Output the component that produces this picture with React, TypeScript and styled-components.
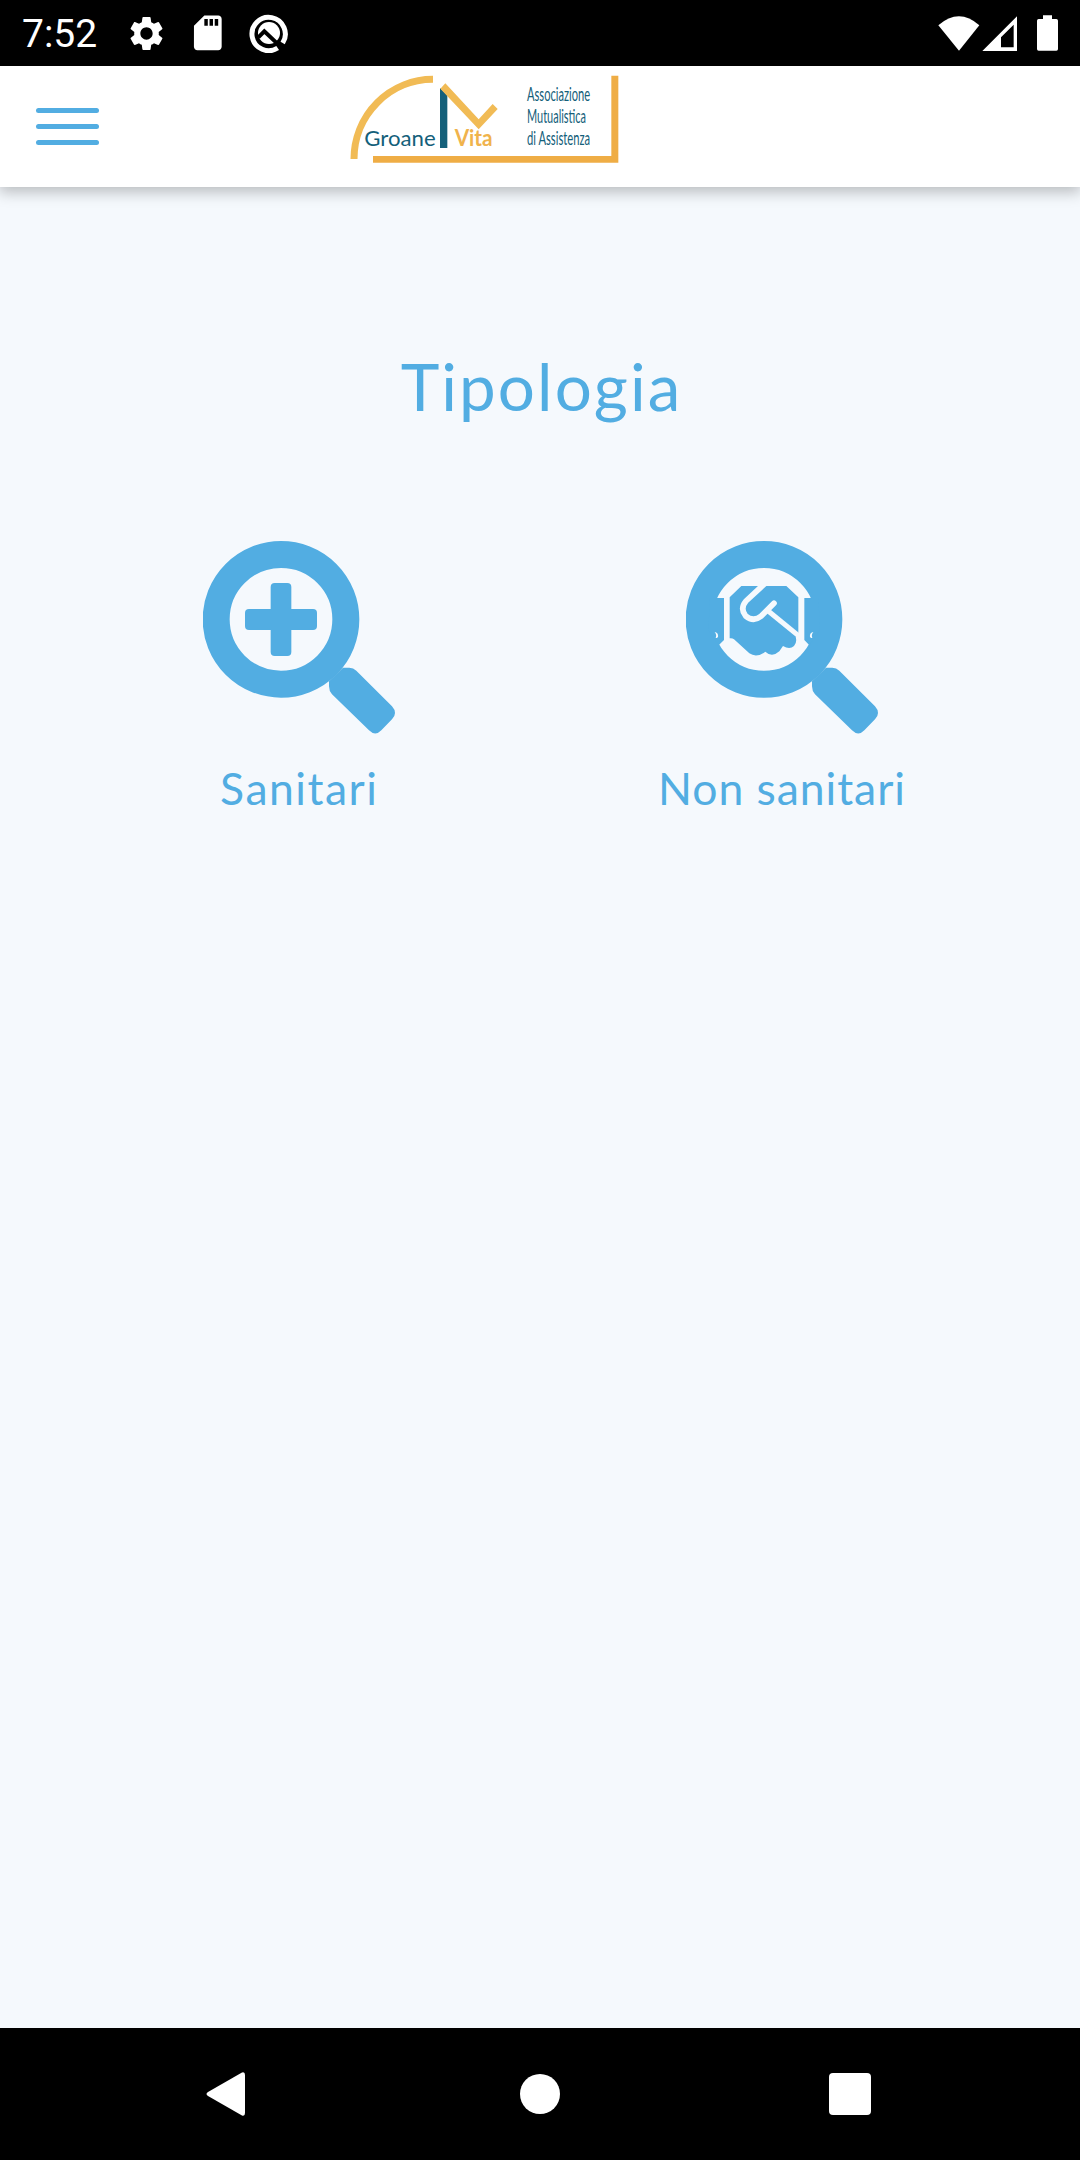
import React from "react";
import styled, { createGlobalStyle } from "styled-components";
import { MdSettings, MdSdCard } from "react-icons/md";

const BLUE = "#52ade2";
const PAGE = "#f5f9fd";
const TEAL = "#14607a";
const GOLD = "#f0b34c";

const GlobalStyle = createGlobalStyle`
  * { box-sizing: border-box; }
  body { margin: 0; background: ${PAGE}; }
  svg { display: block; flex: none; }
`;

const Screen = styled.div`
  display: flex;
  flex-direction: column;
  height: 2160px;
  width: 1080px;
  background: ${PAGE};
  font-family: Lato, "Noto Sans", sans-serif;
`;

const StatusBar = styled.div`
  display: flex;
  align-items: center;
  justify-content: space-between;
  height: 66px;
  padding: 0 22px;
  background: #000;
  color: #fff;
`;

const StatusGroup = styled.div`
  display: flex;
  align-items: center;
`;

const Clock = styled.span`
  width: 104px;
  font: 400 39px/66px Roboto, sans-serif;
  padding-top: 2px;
`;

const StatusIcon = styled.div<{ $gap?: number }>`
  margin-left: ${(p) => p.$gap ?? 0}px;
`;

const Header = styled.header`
  display: flex;
  height: 121px;
  padding-left: 36px;
  background: #fff;
  box-shadow: 0 4px 14px 1px rgba(0, 0, 0, 0.25);
  clip-path: inset(0 0 -30px 0);
`;

const MenuButton = styled.button`
  display: flex;
  flex-direction: column;
  gap: 11px;
  width: 63px;
  margin: 42px 231px 0 0;
  padding: 0;
  border: 0;
  background: none;
`;

const MenuLine = styled.span`
  height: 5px;
  border-radius: 3px;
  background: ${BLUE};
`;

const Main = styled.main`
  flex: 1;
  padding: 157px 57px 0;
  color: ${BLUE};
`;

const Title = styled.h1`
  margin: 0;
  height: 84px;
  font-size: 65.5px;
  line-height: 84px;
  font-weight: 400;
  letter-spacing: 2.1px;
  margin-right: -3px;
  text-align: center;
`;

const Options = styled.div`
  display: grid;
  grid-template-columns: 483px 483px;
  margin-top: 113px;
`;

const Option = styled.div`
  display: flex;
  flex-direction: column;
  align-items: center;
`;

const OptionLabel = styled.span<{ $spacing: number }>`
  margin-top: 26px;
  font-size: 44.5px;
  line-height: 56px;
  letter-spacing: ${(p) => p.$spacing}px;
  margin-right: -${(p) => p.$spacing}px;
`;

const NavBar = styled.nav`
  display: grid;
  grid-template-columns: 310px 310px 310px;
  justify-content: center;
  justify-items: center;
  align-items: center;
  height: 132px;
  background: #000;
`;

function AssistantIcon() {
  return (
    <svg width="40" height="40" viewBox="745 39 120 120" fill="none">
      <path d="M831 144 A50 50 0 1 1 846 129" stroke="#fff" strokeWidth="15" />
      <circle cx="805" cy="99" r="33" fill="#fff" />
      <path d="M773 112 L791 94 L842 142" stroke="#000" strokeWidth="12" />
    </svg>
  );
}

function WifiIcon() {
  return (
    <svg width="42" height="35" viewBox="113 45 126 105">
      <path d="M114 73 Q176 19 237 73 L176 149 Z" fill="#fff" />
    </svg>
  );
}

function SignalIcon() {
  return (
    <svg width="35" height="35" viewBox="246 45 105 105">
      <path d="M247 150 L351 46 V150 Z M341 71 L303 109 V139 H341 Z" fill="#fff" fillRule="evenodd" />
    </svg>
  );
}

function BatteryIcon() {
  return (
    <svg width="21" height="36" viewBox="411 45 63 108">
      <path d="M429 46 H456 V57 H469 Q474 57 474 62 V147 Q474 152 469 152 H416 Q411 152 411 147 V62 Q411 57 416 57 H429 Z" fill="#fff" />
    </svg>
  );
}

function Logo() {
  return (
    <svg width="310" height="114" viewBox="0 18 930 342" fontFamily="Lato, sans-serif">
      <path d="M72 297 A237 239 0 0 1 309 58" fill="none" stroke="#f1bb55" strokeWidth="21" />
      <path d="M129 288 H844 V47 H865 V308 H129 Z" fill="#efad45" />
      <path d="M330 84 L352 106 V264 H330 Z" fill={TEAL} />
      <path d="M331 86 L346 70 L446 178 L488 132 L503 147 L446 208 Z" fill="#f1bb55" />
      <g fill={TEAL}>
        <text x="103" y="257" fontSize="65" textLength="214" lengthAdjust="spacingAndGlyphs">Groane</text>
        <g fontSize="58">
          <text x="591" y="123" textLength="189" lengthAdjust="spacingAndGlyphs">Associazione</text>
          <text x="591" y="189" textLength="177" lengthAdjust="spacingAndGlyphs">Mutualistica</text>
          <text x="591" y="256" textLength="189" lengthAdjust="spacingAndGlyphs">di Assistenza</text>
        </g>
      </g>
      <text x="374" y="257" fontSize="68" fontWeight="700" fill={GOLD} textLength="114" lengthAdjust="spacingAndGlyphs">Vita</text>
    </svg>
  );
}

function Magnifier({ children }: { children: React.ReactNode }) {
  return (
    <svg width="192" height="193" viewBox="69 63 576 579">
      <circle cx="303" cy="298" r="194.5" fill="none" stroke={BLUE} strokeWidth="81" />
      <path
        d="M447 484 L489 443 H508 Q520 443 529 452 L636 559 Q654 579 636 598 L604 631 Q586 650 567 631 L456 523 Q447 513 447 499 Z"
        fill={BLUE}
      />
      {children}
    </svg>
  );
}

function Plus() {
  return (
    <g fill={BLUE}>
      <rect x="272" y="189" width="62" height="219" rx="12" />
      <rect x="195" y="267" width="216" height="63" rx="12" />
    </g>
  );
}

function Handshake() {
  return (
    <g transform="translate(-69 0)">
      <path d="M210 234 H252 V360 L236 376 L205 330 Z M535 234 H493 V360 L508 376 L540 330 Z" fill={BLUE} />
      <path d="M224 336 Q236 339 234 350 Q231 356 227 353 Q231 344 224 336 Z M520 336 Q508 339 510 350 Q513 356 517 353 Q513 344 520 336 Z" fill={PAGE} />
      <path
        d="M304 198 H439 L475 232 V345 L467 350 Q472 368 462 378 Q449 390 429 378 L418 394 Q396 414 376 395 Q350 415 328 400 L282 358 Q276 353 269 355 V232 Z"
        fill={BLUE}
      />
      <path d="M375 190 L318 243 Q299 266 317 288 Q340 307 363 289 L402 250" fill="none" stroke={PAGE} strokeWidth="17" strokeLinecap="round" strokeLinejoin="round" />
      <path d="M381 270 L478 349" stroke={PAGE} strokeWidth="15" />
    </g>
  );
}

export default function App() {
  return (
    <Screen>
      <GlobalStyle />
      <StatusBar>
        <StatusGroup>
          <Clock>7:52</Clock>
          <StatusIcon><MdSettings size={41} /></StatusIcon>
          <StatusIcon $gap={20}><MdSdCard size={41.6} /></StatusIcon>
          <StatusIcon $gap={20.4}><AssistantIcon /></StatusIcon>
        </StatusGroup>
        <StatusGroup>
          <WifiIcon />
          <StatusIcon $gap={2}><SignalIcon /></StatusIcon>
          <StatusIcon $gap={20}><BatteryIcon /></StatusIcon>
        </StatusGroup>
      </StatusBar>
      <Header>
        <MenuButton aria-label="Menu">
          <MenuLine />
          <MenuLine />
          <MenuLine />
        </MenuButton>
        <Logo />
      </Header>
      <Main>
        <Title>Tipologia</Title>
        <Options>
          <Option>
            <Magnifier><Plus /></Magnifier>
            <OptionLabel $spacing={1.5}>Sanitari</OptionLabel>
          </Option>
          <Option>
            <Magnifier><Handshake /></Magnifier>
            <OptionLabel $spacing={0.95}>Non sanitari</OptionLabel>
          </Option>
        </Options>
      </Main>
      <NavBar>
        <svg width="48" height="46" viewBox="0 0 48 46">
          <path d="M36 1.5 L2 21 Q-1 23 2 25 L36 44.5 Q39 45.5 39 42 V4 Q39 .5 36 1.5 Z" fill="#fff" />
        </svg>
        <svg width="40" height="40" viewBox="0 0 40 40">
          <circle cx="20" cy="20" r="20" fill="#fff" />
        </svg>
        <svg width="42" height="42" viewBox="0 0 42 42">
          <rect width="42" height="42" rx="4" fill="#fff" />
        </svg>
      </NavBar>
    </Screen>
  );
}
